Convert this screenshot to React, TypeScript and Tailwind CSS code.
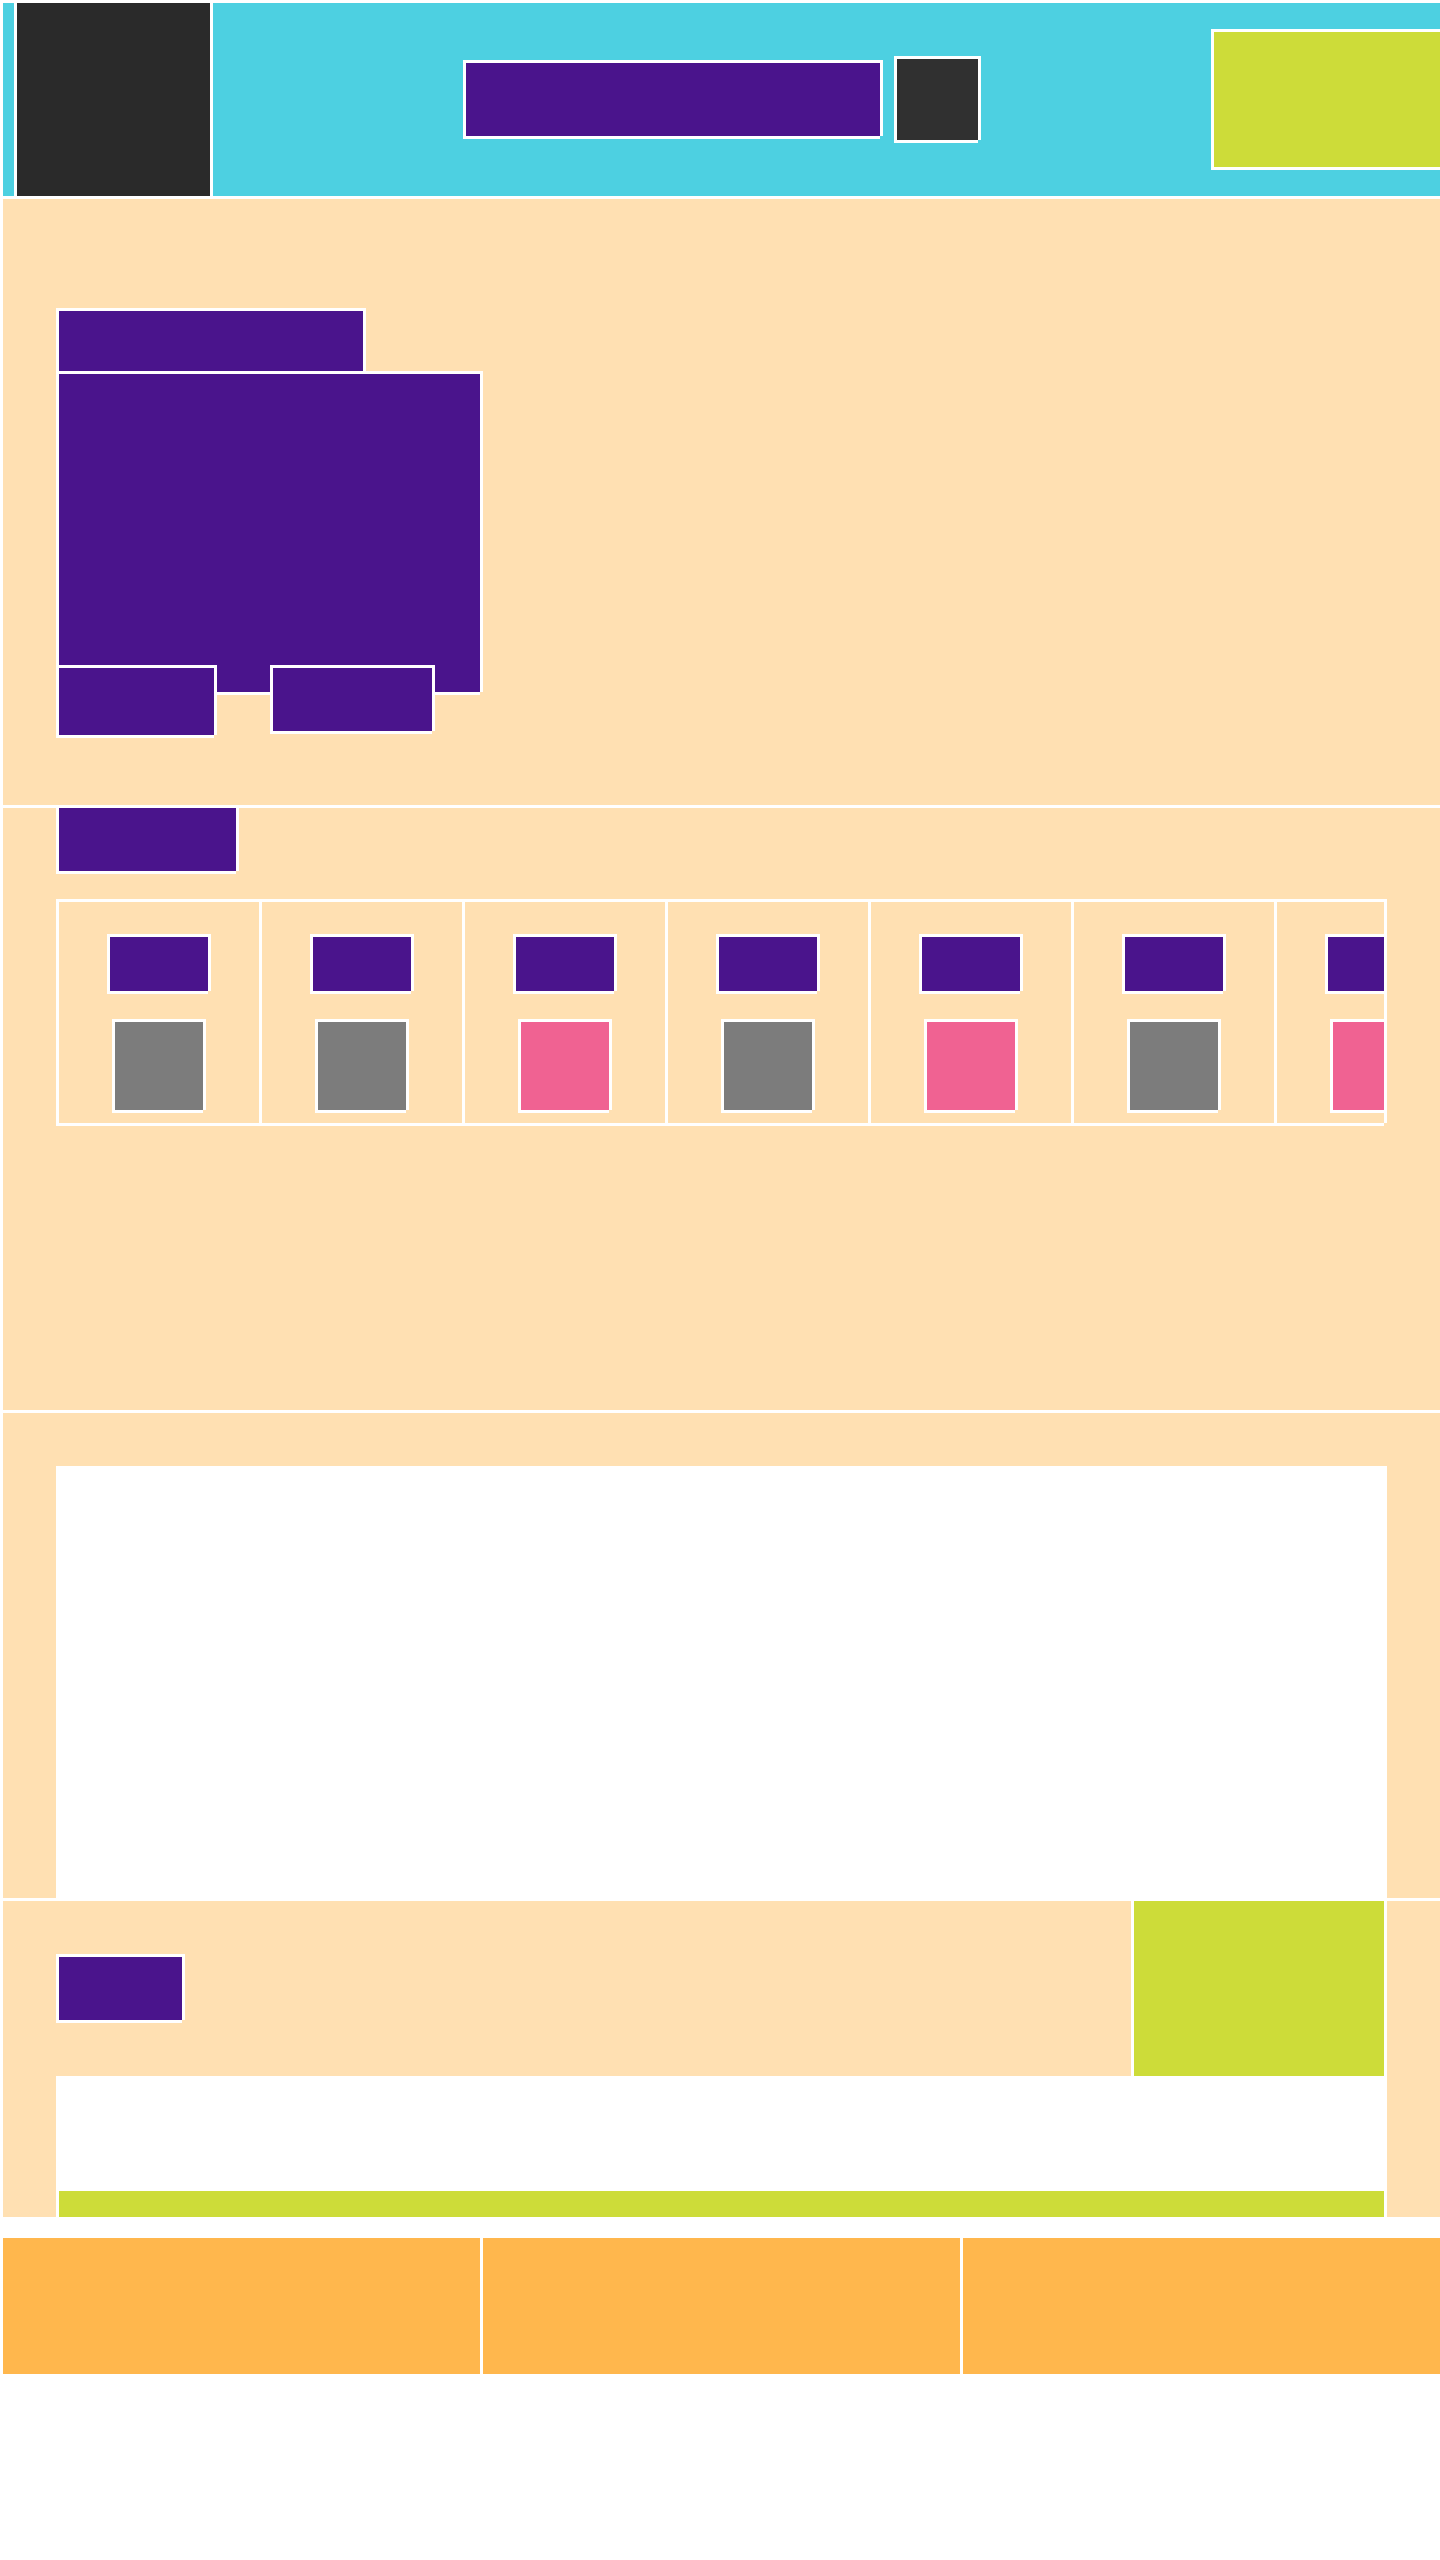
import clsx from "clsx";

// White hairlines: top and left lie inside the tile, right and bottom just outside it.
const outline =
  "shadow-[inset_3px_3px_0_#fff,3px_0_0_#fff,0_3px_0_#fff]";

const days = [
  { id: "day-1", active: false },
  { id: "day-2", active: false },
  { id: "day-3", active: true },
  { id: "day-4", active: false },
  { id: "day-5", active: true },
  { id: "day-6", active: false },
  { id: "day-7", active: true },
];

const tabs = ["First tab", "Second tab", "Third tab"];

function TextBlock({ className }: { className: string }) {
  return <div className={clsx("shrink-0 bg-[#4a148c]", outline, className)} />;
}

function Header() {
  return (
    <header
      className={clsx(
        "grid grid-cols-[1fr_auto_1fr] items-center bg-[#4dd0e1]",
        outline,
      )}
    >
      <div className={clsx("ml-3.5 size-[196px] bg-[#2a2a2a]", outline)} />
      <div className="flex items-center gap-3.5">
        <TextBlock className="h-[76px] w-[417px]" />
        <div className={clsx("size-[84px] bg-[#303030]", outline)} />
      </div>
      <button
        type="button"
        aria-label="Account"
        className={clsx(
          "h-[138px] w-[229px] justify-self-end bg-[#cddc39]",
          outline,
        )}
      />
    </header>
  );
}

function Intro() {
  return (
    <section className={clsx("bg-[#ffe0b2] px-14 pt-28 pb-[70px]", outline)}>
      <TextBlock className="h-[63px] w-[307px]" />
      <TextBlock className="h-[321px] w-[424px]" />
      <div className="-mt-[27px] flex items-start gap-14">
        <TextBlock className="h-[70px] w-[158px]" />
        <TextBlock className="h-[66px] w-[162px]" />
      </div>
    </section>
  );
}

function Week() {
  return (
    <section className={clsx("bg-[#ffe0b2] px-14 pb-[287px]", outline)}>
      <TextBlock className="h-[66px] w-[180px]" />
      <ul className={clsx("mt-7 flex overflow-hidden", outline)}>
        {days.map((day) => (
          <li
            key={day.id}
            className={clsx(
              "flex w-[203px] shrink-0 flex-col items-center gap-7 pt-[35px] pb-[13px]",
              outline,
            )}
          >
            <TextBlock className="h-[57px] w-[101px]" />
            <div
              className={clsx(
                "size-[91px]",
                outline,
                day.active ? "bg-[#f06292]" : "bg-[#7c7c7c]",
              )}
            />
          </li>
        ))}
      </ul>
    </section>
  );
}

function Chart() {
  return (
    <section className={clsx("bg-[#ffe0b2] px-14 pt-14", outline)}>
      <div className={clsx("h-[432px] bg-white", outline)} />
    </section>
  );
}

function Entries() {
  return (
    <section className={clsx("bg-[#ffe0b2] px-14", outline)}>
      <div className="flex items-center justify-between">
        <TextBlock className="h-[66px] w-[126px]" />
        <button
          type="button"
          aria-label="Add"
          className={clsx("h-[178px] w-[253px] bg-[#cddc39]", outline)}
        />
      </div>
      <div className={clsx("h-28 bg-white", outline)} />
      <button
        type="button"
        aria-label="Show more"
        className={clsx("block h-[29px] w-full bg-[#cddc39]", outline)}
      />
    </section>
  );
}

function TabBar() {
  return (
    <nav className="grid grid-cols-3 bg-white pt-[18px]">
      {tabs.map((tab) => (
        <button
          key={tab}
          type="button"
          aria-label={tab}
          className={clsx("h-[139px] bg-[#ffb74d]", outline)}
        />
      ))}
    </nav>
  );
}

export default function App() {
  return (
    <div className="min-h-screen overflow-x-hidden bg-white">
      <Header />
      <main>
        <Intro />
        <Week />
        <Chart />
        <Entries />
      </main>
      <TabBar />
    </div>
  );
}
